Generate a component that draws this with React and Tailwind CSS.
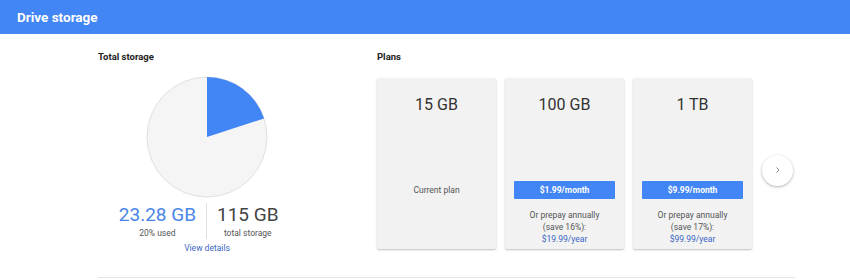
import React from "react";

const PLANS = [
  { size: "15 GB", current: true },
  { size: "100 GB", monthly: "$1.99/month", save: "16%", yearly: "$19.99/year" },
  { size: "1 TB", monthly: "$9.99/month", save: "17%", yearly: "$99.99/year" },
];

function PlanCard({ plan }) {
  return (
    <div className="w-[119px] h-[171px] bg-[#f2f2f2] rounded-[2px] shadow-[0_1px_2px_rgba(0,0,0,0.25)] flex flex-col items-center pt-[16px] px-[9px]">
      <p className="text-[16px] leading-[22px] text-[#333]">{plan.size}</p>
      {plan.current ? (
        <p className="mt-[68px] text-[8.5px] leading-[12px] text-[#555]">Current plan</p>
      ) : (
        <>
          <button className="mt-[65px] w-full h-[18px] bg-[#4285f4] text-white text-[8.5px] font-bold rounded-[1px]">
            {plan.monthly}
          </button>
          <div className="mt-[10px] text-center text-[8.5px] leading-[12px] text-[#555]">
            <p>Or prepay annually</p>
            <p>(save {plan.save}):</p>
            <p className="text-[#3b67c4]">{plan.yearly}</p>
          </div>
        </>
      )}
    </div>
  );
}

function PieChart() {
  return (
    <svg width="122" height="122" viewBox="0 0 122 122">
      <circle cx="61" cy="61" r="60" fill="#f5f5f5" stroke="#e0e0e0" strokeWidth="1" />
      <path d="M61 61 L61 1 A60 60 0 0 1 118.06 42.46 Z" fill="#4285f4" />
    </svg>
  );
}

export default function App() {
  return (
    <div className="w-[850px] h-[280px] bg-white overflow-hidden font-['Roboto',sans-serif]">
      <header className="h-[34px] bg-[#4285f4] flex items-center px-[17px]">
        <h1 className="text-white text-[13.5px] font-bold">Drive storage</h1>
      </header>

      <div className="flex pl-[98px] pt-[17px]">
        <section className="w-[218px] flex flex-col">
          <h2 className="text-[9.5px] leading-[12px] font-bold text-[#222]">Total storage</h2>
          <div className="mt-[13px] flex justify-center">
            <PieChart />
          </div>
          <div className="mt-[5px] grid grid-cols-2">
            <div className="flex justify-end pr-[10px] border-r border-[#e0e0e0]">
              <div className="flex flex-col items-center">
                <span className="text-[19px] leading-[24px] text-[#4a86e8]">23.28 GB</span>
                <span className="text-[8.5px] leading-[12px] text-[#555]">20% used</span>
              </div>
            </div>
            <div className="flex justify-start pl-[10px]">
              <div className="flex flex-col items-center">
                <span className="text-[19px] leading-[24px] text-[#444]">115 GB</span>
                <span className="text-[8.5px] leading-[12px] text-[#555]">total storage</span>
              </div>
            </div>
          </div>
          <a className="mt-[3px] self-center text-[8.5px] leading-[12px] text-[#3b67c4]">View details</a>
        </section>

        <section className="ml-[61px] flex flex-col">
          <h2 className="text-[9.5px] leading-[12px] font-bold text-[#222]">Plans</h2>
          <div className="mt-[15px] flex">
            <div className="flex gap-[9px]">
              {PLANS.map((p) => (
                <PlanCard key={p.size} plan={p} />
              ))}
            </div>
            <button className="ml-[10px] mt-[13px] self-center w-[31px] h-[31px] rounded-full bg-white shadow-[0_1px_3px_rgba(0,0,0,0.3)] flex items-center justify-center">
              <svg width="6" height="8" viewBox="0 0 6 8">
                <path d="M1.5 1.5 L4 4 L1.5 6.5" fill="none" stroke="#888" strokeWidth="1" />
              </svg>
            </button>
          </div>
        </section>
      </div>

      <div className="ml-[98px] mr-[55px] mt-[23px] border-t border-[#e5e5e5]" />
    </div>
  );
}
